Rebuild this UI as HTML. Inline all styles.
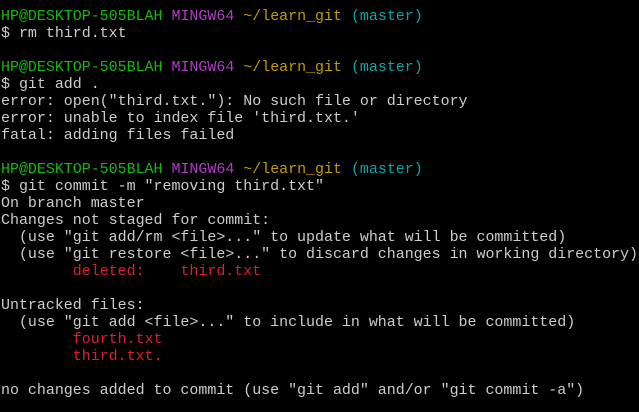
<!DOCTYPE html>
<html><head><meta charset="utf-8"><style>
html,body{margin:0;padding:0;background:#000;width:639px;height:412px;overflow:hidden}
pre{margin:0;padding:8px 0 0 1px;font-family:"Liberation Mono",monospace;font-size:15px;line-height:17px;color:#cccccc;white-space:pre;letter-spacing:-0.03px}
.g{color:#16b80c}.m{color:#b13cc6}.y{color:#c19c00}.c{color:#0fa4a8}.r{color:#d8202c}
</style></head><body><pre><span class="g">HP@DESKTOP-505BLAH</span> <span class="m">MINGW64</span> <span class="y">~/learn_git</span> <span class="c">(master)</span>
$ rm third.txt

<span class="g">HP@DESKTOP-505BLAH</span> <span class="m">MINGW64</span> <span class="y">~/learn_git</span> <span class="c">(master)</span>
$ git add .
error: open("third.txt."): No such file or directory
error: unable to index file 'third.txt.'
fatal: adding files failed

<span class="g">HP@DESKTOP-505BLAH</span> <span class="m">MINGW64</span> <span class="y">~/learn_git</span> <span class="c">(master)</span>
$ git commit -m "removing third.txt"
On branch master
Changes not staged for commit:
  (use "git add/rm &lt;file&gt;..." to update what will be committed)
  (use "git restore &lt;file&gt;..." to discard changes in working directory)
        <span class="r">deleted:    third.txt</span>

Untracked files:
  (use "git add &lt;file&gt;..." to include in what will be committed)
        <span class="r">fourth.txt</span>
        <span class="r">third.txt.</span>

no changes added to commit (use "git add" and/or "git commit -a")
</pre></body></html>
